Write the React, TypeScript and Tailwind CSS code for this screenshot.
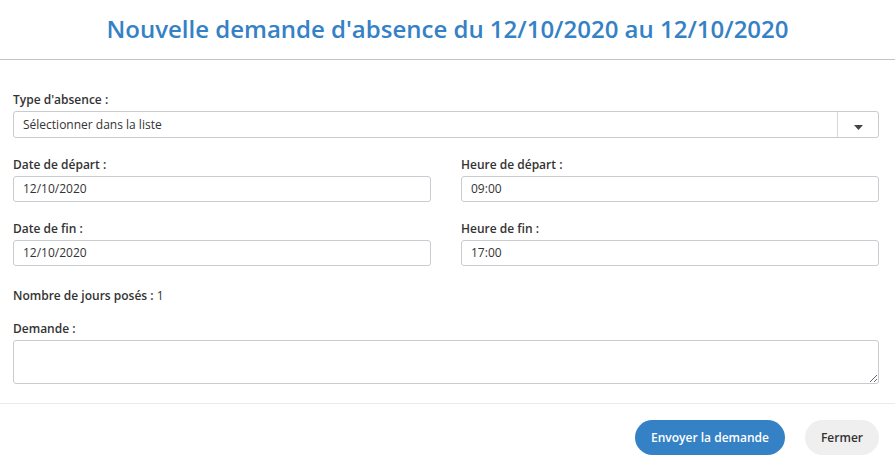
export default function App() {
  const font = { fontFamily: '"Open Sans", "Noto Sans", sans-serif' };
  const input =
    "w-full h-[26px] border border-[#c8ccd0] rounded-[3px] px-[9px] text-[12px] text-[#333] flex items-center";
  const label = "text-[12px] font-semibold text-[#333] leading-[16px] mb-[3px]";
  return (
    <div className="w-[895px] h-[467px] bg-white flex flex-col" style={font}>
      <div className="h-[60px] border-b border-[#c4c4c8] flex items-center justify-center">
        <h1 className="text-[24px] font-semibold text-[#3581c5] mb-[1px]">
          Nouvelle demande d'absence du 12/10/2020 au 12/10/2020
        </h1>
      </div>
      <div className="pl-[13px] pr-[16px] pt-[32px] border-b border-[#ebebeb] pb-[19px]">
        <div className={label}>Type d'absence :</div>
        <div className="w-full h-[27px] border border-[#c8ccd0] rounded-[3px] flex text-[12px] text-[#333]">
          <div className="flex-1 flex items-center px-[9px]">Sélectionner dans la liste</div>
          <div className="w-[41px] border-l border-[#d6d9dc] flex items-end justify-center pb-[7px]">
            <svg width="9" height="5" viewBox="0 0 9 5">
              <path d="M0 0H9L4.5 5Z" fill="#444" />
            </svg>
          </div>
        </div>
        <div className="grid grid-cols-2 gap-x-[30px] mt-[19px] gap-y-[19px]">
          <div>
            <div className={label}>Date de départ :</div>
            <div className={input}>12/10/2020</div>
          </div>
          <div>
            <div className={label}>Heure de départ :</div>
            <div className={input}>09:00</div>
          </div>
          <div>
            <div className={label}>Date de fin :</div>
            <div className={input}>12/10/2020</div>
          </div>
          <div>
            <div className={label}>Heure de fin :</div>
            <div className={input}>17:00</div>
          </div>
        </div>
        <div className="text-[12px] text-[#333] mt-[22px] leading-[16px]">
          <span className="font-semibold">Nombre de jours posés :</span> 1
        </div>
        <div className={label + " mt-[17px]"}>Demande :</div>
        <textarea className="w-full h-[44px] border border-[#c8ccd0] rounded-[3px] block resize-y outline-none" />
      </div>
      <div className="flex justify-end items-center gap-[20px] pr-[16px] pt-[16px]">
        <button className="h-[35px] px-[16px] rounded-full bg-[#3581c5] text-white text-[12px] font-semibold">
          Envoyer la demande
        </button>
        <button className="h-[35px] px-[16px] rounded-full bg-[#efefef] text-[#333] text-[12px] font-semibold">
          Fermer
        </button>
      </div>
    </div>
  );
}
